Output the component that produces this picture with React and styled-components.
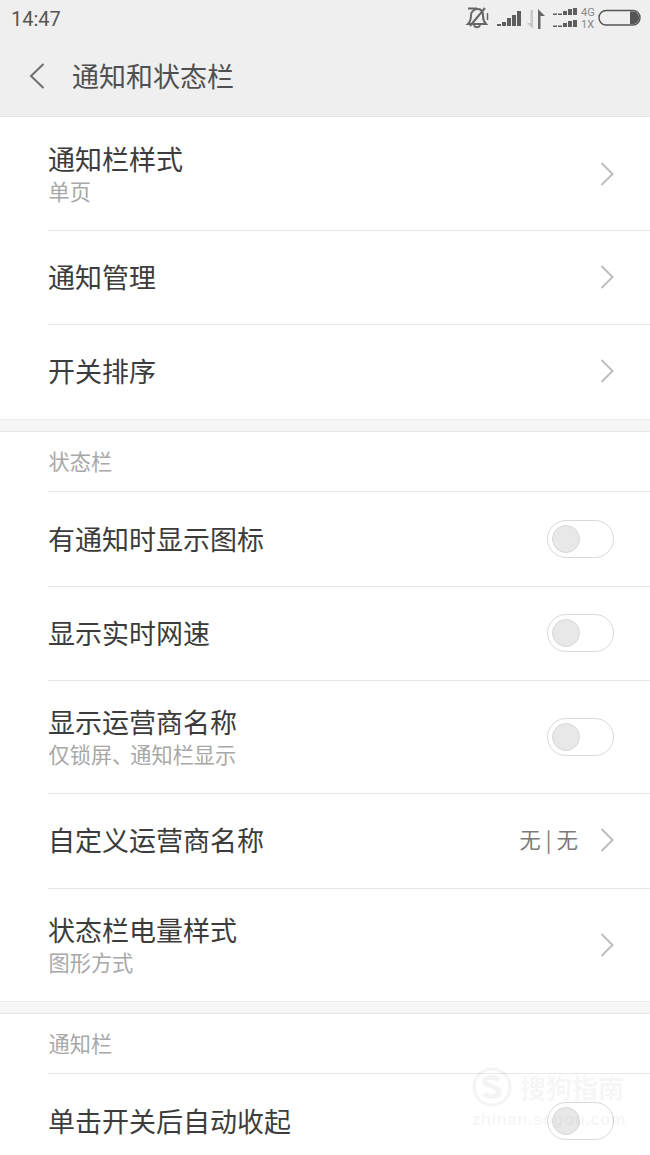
import React from 'react';
import styled, { createGlobalStyle } from 'styled-components';

const GlobalStyle = createGlobalStyle`
  html, body {
    margin: 0;
    padding: 0;
    background: #fff;
    font-family: "Noto Sans CJK SC", "Noto Sans", sans-serif;
  }
`;

const Page = styled.div`
  position: relative;
  width: 650px;
  height: 1155px;
  overflow: hidden;
  background: #fff;
`;

const Top = styled.header`
  height: 116px;
  background: #efefef;
  border-bottom: 1px solid #e3e3e3;
`;

const StatusBar = styled.div`
  height: 38px;
  display: flex;
  align-items: center;
  justify-content: space-between;
  padding: 0 9px 0 11px;
`;

const Clock = styled.span`
  font-family: Roboto, sans-serif;
  font-size: 20px;
  color: #555;
`;

const StatusIcons = styled.svg`
  display: block;
`;

const TitleBar = styled.div`
  height: 78px;
  display: flex;
  align-items: center;
  padding-left: 29px;
  padding-bottom: 2px;
  box-sizing: border-box;
`;

const Title = styled.h1`
  margin: 0 0 0 27px;
  font-size: 27px;
  line-height: 36px;
  font-weight: 400;
  color: #505050;
`;

const Row = styled.div`
  height: ${(p) => p.$h}px;
  margin-left: 48px;
  padding-right: 36px;
  padding-bottom: ${(p) => (p.$lift ? 2 : 0)}px;
  box-sizing: border-box;
  display: flex;
  align-items: center;
  justify-content: space-between;
  border-bottom: ${(p) => (p.$last ? 'none' : '1px solid #e6e6e6')};
`;

const Texts = styled.div`
  display: flex;
  flex-direction: column;
  padding-bottom: 3px;
`;

const Name = styled.span`
  font-size: 27px;
  line-height: 36px;
  color: #3c3c3c;
`;

const Sub = styled.span`
  font-size: 21.2px;
  line-height: 26px;
  padding-top: 1px;
  padding-left: 0.5px;
  color: #a8a8a8;
`;

const Comma = styled.span`
  letter-spacing: -3px;
`;

const Right = styled.div`
  display: flex;
  align-items: center;
`;

const Value = styled.span`
  font-size: 21.2px;
  line-height: 28px;
  color: #7a7a7a;
  margin-right: 22px;
  margin-bottom: 2px;
  word-spacing: 0.5px;
`;

const Gap = styled.div`
  height: 11px;
  background: #f6f6f6;
  border-top: 1px solid #ececec;
  border-bottom: 1px solid #e6e6e6;
`;

const SectionHead = styled.div`
  height: 60px;
  margin-left: 48px;
  padding-left: 0.5px;
  padding-bottom: 3px;
  box-sizing: border-box;
  display: flex;
  align-items: center;
  font-size: 21.2px;
  color: #a8a8a8;
  border-bottom: 1px solid #e6e6e6;
`;

const Track = styled.div`
  width: 67px;
  height: 38px;
  box-sizing: border-box;
  border: 1px solid #d9d9d9;
  border-radius: 19px;
  background: #fff;
  display: flex;
  align-items: center;
  padding-left: 4px;
`;

const Knob = styled.div`
  width: 28px;
  height: 28px;
  box-sizing: border-box;
  border-radius: 50%;
  background: #e8e8e8;
  border: 1px solid #d8d8d8;
`;

// faint sogou watermark over the bottom right corner
const Watermark = styled.div`
  position: absolute;
  left: 472px;
  top: 1067px;
  width: 156px;
  pointer-events: none;
  color: rgba(120, 120, 120, 0.08);
`;

const MarkTop = styled.div`
  display: flex;
  align-items: center;
  gap: 8px;
  font-size: 26px;
  font-weight: 700;
  line-height: 40px;
  white-space: nowrap;
`;

const MarkUrl = styled.div`
  font-family: "Liberation Sans", sans-serif;
  font-size: 17px;
  font-weight: 700;
  line-height: 20px;
  letter-spacing: 0.3px;
  margin-top: 3px;
  white-space: nowrap;
`;

const Back = () => (
  <svg width="16" height="26" viewBox="0 0 16 26" fill="none">
    <path d="M14.5 1 L2 13 L14.5 25" stroke="#6f6f6f" strokeWidth="2" />
  </svg>
);

const Chevron = () => (
  <svg width="14" height="24" viewBox="0 0 14 24" fill="none" style={{ display: 'block' }}>
    <path d="M1.5 1 L12.5 12 L1.5 23" stroke="#bdbdbd" strokeWidth="2" />
  </svg>
);

const Toggle = () => (
  <Track>
    <Knob />
  </Track>
);

const SignalBars = ({ x, y, h, gap = 5, w = 4, color = '#5e5e5e' }) => (
  <g fill={color}>
    {h.map((v, i) => (
      <rect key={i} x={x + i * gap} y={y - v} width={w} height={v} />
    ))}
  </g>
);

const Status = () => (
  <StatusIcons width="176" height="30" viewBox="0 0 176 30">
    {/* muted bell */}
    <g fill="none" stroke="#666" strokeWidth="2">
      <path d="M3 20 C6 17 6 14 6 11 C6 7 10 5 13 5 C17 5 18 9 18 12 C18 15 19 18 21 20 Z" />
      <path d="M9 21 C10 24 14 24 15 21" />
      <path d="M3 4.5 L12 4.5 M20 4 L5 22" />
      <path d="M22.5 9 L22.5 16" strokeWidth="1.5" />
    </g>
    <SignalBars x={32} y={22} h={[2, 4, 8, 11, 15]} />
    {/* data arrows */}
    <path d="M65.5 6 L68 6 L68 25 L62 19 L65.5 19 Z" fill="#c8c8c8" />
    <path d="M73 5 L80 12 L75.5 12 L75.5 25 L73 25 Z" fill="#666" />
    <SignalBars x={88} y={11} h={[1.5, 1.5, 4, 6, 7]} />
    <SignalBars x={88} y={23} h={[1.5, 1.5, 4, 6, 7]} />
    <text x="116" y="12" fontFamily="Roboto, sans-serif" fontSize="11" fill="#888">4G</text>
    <text x="116" y="24" fontFamily="Roboto, sans-serif" fontSize="11" fill="#888">1X</text>
    <rect x="134" y="6.5" width="41" height="14.5" rx="7.2" fill="none" stroke="#555" strokeWidth="1.4" />
    <path d="M165 7.5 L168 7.5 C171.5 7.5 174 10.5 174 13.7 C174 17 171.5 20 168 20 L165 20 Z" fill="#555" />
  </StatusIcons>
);

export default function App() {
  return (
    <Page>
      <GlobalStyle />
      <Top>
        <StatusBar>
          <Clock>14:47</Clock>
          <Status />
        </StatusBar>
        <TitleBar>
          <Back />
          <Title>通知和状态栏</Title>
        </TitleBar>
      </Top>

      <Row $h={114}>
        <Texts>
          <Name>通知栏样式</Name>
          <Sub>单页</Sub>
        </Texts>
        <Chevron />
      </Row>
      <Row $h={94} $lift>
        <Name>通知管理</Name>
        <Chevron />
      </Row>
      <Row $h={94} $last $lift>
        <Name>开关排序</Name>
        <Chevron />
      </Row>

      <Gap />
      <SectionHead>状态栏</SectionHead>
      <Row $h={95}>
        <Name>有通知时显示图标</Name>
        <Toggle />
      </Row>
      <Row $h={94} $lift>
        <Name>显示实时网速</Name>
        <Toggle />
      </Row>
      <Row $h={113}>
        <Texts>
          <Name>显示运营商名称</Name>
          <Sub>
            仅锁屏<Comma>、</Comma>通知栏显示
          </Sub>
        </Texts>
        <Toggle />
      </Row>
      <Row $h={95} $lift>
        <Name>自定义运营商名称</Name>
        <Right>
          <Value>无 | 无</Value>
          <Chevron />
        </Right>
      </Row>
      <Row $h={112} $last>
        <Texts>
          <Name>状态栏电量样式</Name>
          <Sub>图形方式</Sub>
        </Texts>
        <Chevron />
      </Row>

      <Gap />
      <SectionHead>通知栏</SectionHead>
      <Row $h={94} $last>
        <Name>单击开关后自动收起</Name>
        <Toggle />
      </Row>

      <Watermark>
        <MarkTop>
          <svg width="40" height="40" viewBox="0 0 40 40" fill="none" stroke="currentColor">
            <circle cx="20" cy="20" r="18" strokeWidth="3" />
            <path d="M27 13 C22 9 12 10 13 15 C14 20 27 19 27 25 C27 30 17 31 12 27" strokeWidth="5" />
          </svg>
          <span>搜狗指南</span>
        </MarkTop>
        <MarkUrl>zhinan.sogou.com</MarkUrl>
      </Watermark>
    </Page>
  );
}
